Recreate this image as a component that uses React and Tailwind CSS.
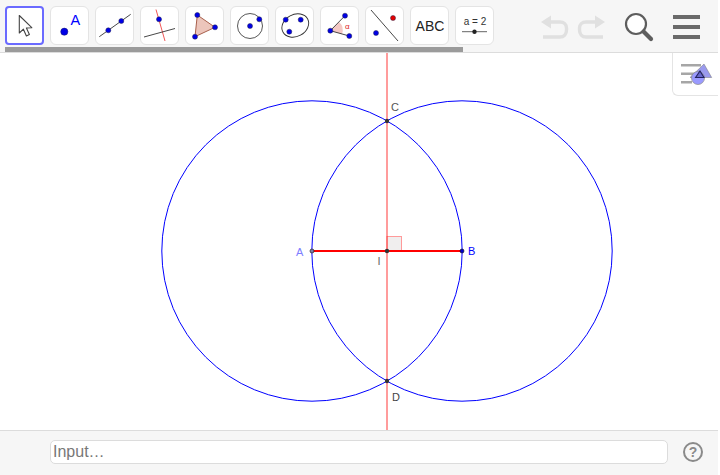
const F = { fontFamily: '"Liberation Sans", Arial, sans-serif' };

function Dot({ x, y, r = 2.5, c = "#0000e6" }) {
  return <circle cx={x} cy={y} r={r} fill={c} stroke="#26264d" strokeWidth="0.5" />;
}

const icons = [
  <g key="0">
    <path d="M14.3 9.5 L14.3 27 L18.4 23.2 L21.4 30 L24.4 28.6 L21.4 22 L26.8 21.7 Z" fill="#fff" stroke="#444" strokeWidth="1.1" strokeLinejoin="round" />
  </g>,
  <g key="1">
    <circle cx="14.3" cy="25.7" r="3.6" fill="#0000e6" stroke="#1a1a66" strokeWidth="0.5" />
    <text x="20.5" y="19" fontSize="14.5" fill="#0000ff" style={F}>A</text>
  </g>,
  <g key="2">
    <line x1="4.3" y1="30.7" x2="35.7" y2="8.3" stroke="#333" strokeWidth="0.9" />
    <Dot x={13.3} y={24.3} />
    <Dot x={26.3} y={15} />
  </g>,
  <g key="3">
    <line x1="16" y1="3.5" x2="25" y2="35" stroke="#ee4444" strokeWidth="0.9" />
    <line x1="4" y1="31" x2="35" y2="22.5" stroke="#333" strokeWidth="0.9" />
    <Dot x={19} y={13.3} />
  </g>,
  <g key="4">
    <path d="M12.3 9 L30 21.3 L10 30.7 Z" fill="#ecc5bb" stroke="#a8604c" strokeWidth="1" />
    <Dot x={12.3} y={9} />
    <Dot x={30} y={21.3} />
    <Dot x={10} y={30.7} />
  </g>,
  <g key="5">
    <circle cx="20" cy="20" r="12.5" fill="none" stroke="#444" strokeWidth="0.9" />
    <Dot x={20} y={20} />
    <Dot x={29.3} y={13.3} />
  </g>,
  <g key="6">
    <ellipse cx="20.3" cy="19.5" rx="14" ry="11" transform="rotate(-28 20.3 19.5)" fill="none" stroke="#333" strokeWidth="0.9" />
    <Dot x={10.7} y={13.7} />
    <Dot x={25.7} y={13.7} />
    <Dot x={14.3} y={25.7} />
  </g>,
  <g key="7">
    <path d="M10.3 24.7 L19 16 A 11 11 0 0 1 22 28 Z" fill="#f4c8c4" />
    <line x1="10.3" y1="24.7" x2="25" y2="9.7" stroke="#333" strokeWidth="0.9" />
    <line x1="10.3" y1="24.7" x2="29.3" y2="30" stroke="#333" strokeWidth="0.9" />
    <Dot x={10.3} y={24.7} />
    <Dot x={25} y={9.7} />
    <Dot x={29.3} y={30} />
    <text x="25" y="22.5" fontSize="8" fill="#dd2222" style={F}>α</text>
  </g>,
  <g key="8">
    <line x1="6" y1="4" x2="33" y2="35" stroke="#333" strokeWidth="0.9" />
    <Dot x={28} y={12} c="#e60000" />
    <Dot x={11} y={27} />
  </g>,
  <g key="9">
    <text x="20" y="24.5" textAnchor="middle" fontSize="14" fill="#222" style={F}>ABC</text>
  </g>,
  <g key="10">
    <text x="20" y="18.5" textAnchor="middle" fontSize="10" fill="#333" style={F}>a = 2</text>
    <line x1="7" y1="25.7" x2="32" y2="25.7" stroke="#555" strokeWidth="0.9" />
    <circle cx="19.5" cy="25.7" r="2.2" fill="#222" />
  </g>,
];

function ToolButton({ active, children }) {
  return (
    <div
      className={
        active
          ? "w-[39px] h-[39px] rounded-[4px] bg-white border-2 border-[#6a6aff] shrink-0 relative"
          : "w-[39px] h-[39px] rounded-[6px] bg-white border border-[#e4e4e4] shrink-0 relative"
      }
    >
      <svg width="39" height="39" viewBox="0 0 39 39" className={active ? "absolute -left-[2px] -top-[2px]" : "absolute -left-px -top-px"}>
        {children}
      </svg>
    </div>
  );
}

function Toolbar() {
  return (
    <div className="h-[53px] bg-[#f6f6f6] border-b border-[#dcdcdc] relative">
      <div className="flex items-start pt-[6px] pl-[5px] gap-[6px] h-[47px]">
        {icons.map((ic, i) => (
          <ToolButton key={i} active={i === 0}>{ic}</ToolButton>
        ))}
        <div className="flex items-center ml-[39px] h-[39px] pt-[2px]">
          <svg width="30" height="26" viewBox="0 0 30 26" className="shrink-0">
            <path d="M2 8 L12 1.5 L12 14.5 Z" fill="#e0e0e0" />
            <path d="M10 8 H21 C25 8 27.5 10.5 27.5 14 V16 C27.5 20 25 23 21 23 H4" fill="none" stroke="#e0e0e0" strokeWidth="3.4" />
          </svg>
          <svg width="30" height="26" viewBox="0 0 30 26" className="ml-[8px] shrink-0">
            <path d="M28 8 L18 1.5 L18 14.5 Z" fill="#e0e0e0" />
            <path d="M20 8 H9 C5 8 2.5 10.5 2.5 14 V16 C2.5 20 5 23 9 23 H26" fill="none" stroke="#e0e0e0" strokeWidth="3.4" />
          </svg>
          <svg width="30" height="30" viewBox="0 0 30 30" className="ml-[17px] shrink-0">
            <circle cx="12" cy="12" r="10" fill="#fff" stroke="#5d5d5d" strokeWidth="2.2" />
            <line x1="19.5" y1="19.5" x2="27" y2="27" stroke="#5d5d5d" strokeWidth="4.2" strokeLinecap="round" />
          </svg>
          <div className="ml-[19px] w-[27px] flex flex-col gap-[6px] shrink-0">
            <div className="h-[4px] bg-[#6a6a6a]" />
            <div className="h-[4px] bg-[#6a6a6a]" />
            <div className="h-[4px] bg-[#6a6a6a]" />
          </div>
        </div>
      </div>
      <div className="h-[5px] w-[458px] ml-[5px] bg-[#9b9b9b]" />
    </div>
  );
}

function Canvas() {
  return (
    <div className="relative h-[377px] bg-white">
      <svg width="718" height="377" viewBox="0 53 718 377" className="block">
        <rect x="387" y="236.5" width="14.5" height="14.5" fill="#f0eeee" stroke="#ff9a9a" strokeWidth="1" />
        <line x1="387" y1="53" x2="387" y2="430" stroke="#ff0000" strokeOpacity="0.6" strokeWidth="1.3" />
        <circle cx="312" cy="251" r="150.2" fill="none" stroke="#0000ff" strokeWidth="1" />
        <circle cx="462" cy="251" r="150.2" fill="none" stroke="#0000ff" strokeWidth="1" />
        <line x1="312" y1="251" x2="462" y2="251" stroke="#ff0000" strokeWidth="1.8" />
        <circle cx="312" cy="251" r="2" fill="#7d7da8" stroke="#222" strokeWidth="0.7" />
        <circle cx="462" cy="251" r="2" fill="#0000cc" stroke="#111" strokeWidth="0.6" />
        <circle cx="387" cy="251" r="2.2" fill="#333" />
        <circle cx="387" cy="121" r="2.2" fill="#333" />
        <circle cx="387" cy="381" r="2.2" fill="#333" />
        <g style={F} fontSize="11">
          <text x="296" y="256" fill="#7d7dff">A</text>
          <text x="468" y="255" fill="#0000ff">B</text>
          <text x="391" y="111" fill="#555">C</text>
          <text x="392" y="401" fill="#444">D</text>
          <text x="377.5" y="265" fill="#666">I</text>
        </g>
      </svg>
      <div className="absolute right-0 top-0 w-[46px] h-[43px] bg-white border-l border-b border-[#e4e4e4] rounded-bl-[6px] flex items-center justify-center">
        <svg width="35" height="28" viewBox="678 60 35 28">
          <g fill="#a6a6a6">
            <rect x="681" y="64" width="20" height="2.5" />
            <rect x="681" y="72.5" width="15" height="2.5" />
            <rect x="681" y="81" width="11" height="2.5" />
          </g>
          <path d="M704 64 L711.7 77.5 L690 77.5 Z" fill="#9a9aee" stroke="#777" strokeWidth="0.5" />
          <circle cx="698" cy="78" r="6.5" fill="#9a9aff" stroke="#888" strokeWidth="0.7" />
          <path d="M700 71 L704 77.5 L695.6 77.5 Z" fill="#6868cc" stroke="#22225e" strokeWidth="1.1" />
        </svg>
      </div>
    </div>
  );
}

function InputBar() {
  return (
    <div className="h-[45px] bg-[#f6f6f6] border-t border-[#dcdcdc] flex items-start pt-[9px] pl-[50px]">
      <div className="w-[618px] h-[24px] bg-white border border-[#dcdcdc] rounded-[5px] flex items-center pl-[2px] text-[16px] leading-none text-[#777] shrink-0" style={F}>
        Input…
      </div>
      <div className="ml-[15px] w-[20px] h-[20px] mt-[2px] rounded-full border-2 border-[#8a8a8a] flex items-center justify-center text-[14px] font-bold leading-none text-[#8a8a8a] shrink-0" style={F}>
        ?
      </div>
    </div>
  );
}

export default function App() {
  return (
    <div className="w-[720px] h-[475px] overflow-hidden bg-white">
      <div className="w-[718px]">
        <Toolbar />
        <Canvas />
        <InputBar />
      </div>
    </div>
  );
}
